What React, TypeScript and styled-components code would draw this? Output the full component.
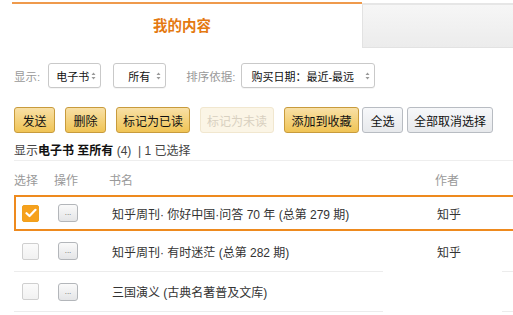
import styled, { createGlobalStyle } from 'styled-components';

const GlobalStyle = createGlobalStyle`
  html, body {
    margin: 0;
    padding: 0;
    background: #ffffff;
    overflow: hidden;
  }
  body {
    font-family: "Liberation Sans", "Noto Sans CJK SC", sans-serif;
    color: #333;
  }
`;

const Page = styled.div`
  position: relative;
  width: 540px;
  height: 315px;
  overflow: hidden;
`;

const TabBar = styled.div`
  display: flex;
  margin: 2px 0 0 12px;
  height: 45px;
`;

type TabProps = {
  active?: boolean;
};

const Tab = styled.div<TabProps>`
  box-sizing: border-box;
  display: flex;
  align-items: center;
  justify-content: center;
  width: ${(p) => (p.active ? '350px' : '160px')};
  height: 45px;
  border-top: 2px solid ${(p) => (p.active ? '#ef9a4c' : '#e6e6e6')};
  border-left: ${(p) => (p.active ? 'none' : '1px solid #e2e2e2')};
  border-bottom: ${(p) => (p.active ? 'none' : '1px solid #e2e2e2')};
  margin-top: ${(p) => (p.active ? '0' : '1px')};
  background: ${(p) =>
    p.active ? '#ffffff' : 'linear-gradient(#f6f6f6, #ececec)'};
  color: #e47911;
  font-size: 14.5px;
  font-weight: bold;
  padding: 0 10px 2px 0;
`;

const FilterRow = styled.div`
  display: flex;
  align-items: center;
  margin: 16px 0 0 14px;
  height: 25px;
  font-size: 12px;
`;

type LabelProps = {
  gap: number;
};

const Label = styled.span<LabelProps>`
  color: #999;
  font-size: 11.5px;
  white-space: nowrap;
  margin-right: ${(p) => p.gap}px;
`;

type SelectProps = {
  w: number;
  padLeft: number;
  after: number;
};

const Select = styled.div<SelectProps>`
  box-sizing: border-box;
  flex-shrink: 0;
  display: flex;
  align-items: center;
  justify-content: space-between;
  width: ${(p) => p.w}px;
  height: 25px;
  padding: 0 4px 0 ${(p) => p.padLeft}px;
  margin-right: ${(p) => p.after}px;
  border: 1px solid #c9c9c9;
  border-radius: 3px;
  background: #fff;
  color: #111;
  font-size: 11px;
  white-space: nowrap;
  box-shadow: 0 1px 0 rgba(0, 0, 0, 0.04);
  svg {
    flex-shrink: 0;
  }
`;

const ButtonRow = styled.div`
  display: flex;
  margin: 19px 0 0 14px;
  height: 26px;
`;

type BtnProps = {
  kind: 'gold' | 'gray' | 'disabled';
  w: number;
  after: number;
};

const Button = styled.div<BtnProps>`
  box-sizing: border-box;
  flex-shrink: 0;
  display: flex;
  align-items: center;
  justify-content: center;
  width: ${(p) => p.w}px;
  height: 26px;
  margin-right: ${(p) => p.after}px;
  border-radius: 3px;
  font-size: 12px;
  white-space: nowrap;
  border: 1px solid
    ${(p) =>
      p.kind === 'gold' ? '#c89b3c' : p.kind === 'gray' ? '#b8bcc2' : '#f1e7cf'};
  background: ${(p) =>
    p.kind === 'gold'
      ? 'linear-gradient(#f8e0a6, #f0c455)'
      : p.kind === 'gray'
        ? 'linear-gradient(#f7f8fa, #e7e9ec)'
        : '#fbf5e6'};
  color: ${(p) => (p.kind === 'disabled' ? '#d8d0c0' : '#111')};
`;

const Status = styled.div`
  margin: 10px 0 0 14px;
  height: 17px;
  line-height: 17px;
  font-size: 12px;
  color: #444;
  border-bottom: 1px solid #eeeeee;
  b {
    color: #111;
  }
`;

const Grid = styled.div`
  display: grid;
  grid-template-columns: 40px 55px 326px 1fr;
  align-items: center;
`;

const Header = styled(Grid)`
  margin-left: 14px;
  padding: 12px 0 6px;
  line-height: 16px;
  font-size: 12px;
  color: #999;
`;

type RowProps = {
  selected?: boolean;
  h: number;
};

const Row = styled(Grid)<RowProps>`
  box-sizing: border-box;
  margin-left: 14px;
  height: ${(p) => p.h}px;
  font-size: 12px;
  color: #333;
  border-bottom: ${(p) => (p.selected ? 'none' : '1px solid #ececec')};
  box-shadow: ${(p) => (p.selected ? 'inset 0 0 0 2px #ee8a1e' : 'none')};
`;

type CellProps = {
  pad: number;
};

const Cell = styled.div<CellProps>`
  display: flex;
  align-items: center;
  padding-left: ${(p) => p.pad}px;
  white-space: nowrap;
`;

const CheckBox = styled.div<{ checked?: boolean }>`
  box-sizing: border-box;
  width: 17px;
  height: 17px;
  border-radius: 2px;
  display: flex;
  align-items: center;
  justify-content: center;
  border: 1px solid ${(p) => (p.checked ? '#f0a01c' : '#cfcfcf')};
  background: ${(p) => (p.checked ? '#f6a11d' : 'linear-gradient(#fbfbfb, #f1f1f1)')};
`;

const MoreButton = styled.div`
  box-sizing: border-box;
  width: 20px;
  height: 18px;
  border: 1px solid #b3b6ba;
  border-radius: 3px;
  background: linear-gradient(#fafafa, #e4e5e7);
  color: #666;
  font-size: 8px;
  line-height: 16px;
  text-align: center;
`;

const Cover = styled.div`
  position: absolute;
  left: 383px;
  top: 268px;
  width: 119px;
  height: 47px;
  background: #fff;
`;

function Arrows() {
  return (
    <svg width="5" height="8" viewBox="0 0 5 8">
      <path d="M2.5 0.5 L4.5 3 L0.5 3 Z M2.5 7.5 L4.5 5 L0.5 5 Z" fill="#999" />
    </svg>
  );
}

function Check() {
  return (
    <svg width="12" height="10" viewBox="0 0 12 10">
      <path
        d="M1.5 5.2 L4.5 8 L10.5 1.8"
        fill="none"
        stroke="#fff"
        strokeWidth="2.2"
        strokeLinecap="round"
        strokeLinejoin="round"
      />
    </svg>
  );
}

const books = [
  { title: '知乎周刊· 你好中国·问答 70 年 (总第 279 期)', author: '知乎', checked: true },
  { title: '知乎周刊· 有时迷茫 (总第 282 期)', author: '知乎', checked: false },
  { title: '三国演义 (古典名著普及文库)', author: '', checked: false },
];

function App() {
  return (
    <Page>
      <GlobalStyle />
      <TabBar>
        <Tab active>我的内容</Tab>
        <Tab />
      </TabBar>

      <FilterRow>
        <Label gap={8}>显示:</Label>
        <Select w={53} padLeft={7} after={12}>
          电子书 <Arrows />
        </Select>
        <Select w={53} padLeft={14} after={20}>
          所有 <Arrows />
        </Select>
        <Label gap={6}>排序依据:</Label>
        <Select w={134} padLeft={9} after={0}>
          购买日期：最近-最远 <Arrows />
        </Select>
      </FilterRow>

      <ButtonRow>
        <Button kind="gold" w={41} after={10}>发送</Button>
        <Button kind="gold" w={41} after={10}>删除</Button>
        <Button kind="gold" w={74} after={10}>标记为已读</Button>
        <Button kind="disabled" w={74} after={10}>标记为未读</Button>
        <Button kind="gold" w={75} after={3}>添加到收藏</Button>
        <Button kind="gray" w={41} after={4}>全选</Button>
        <Button kind="gray" w={86} after={0}>全部取消选择</Button>
      </ButtonRow>

      <Status>
        显示<b>电子书 至所有</b> (4) &nbsp;| 1 已选择
      </Status>

      <Header>
        <span>选择</span>
        <span>操作</span>
        <span>书名</span>
        <span>作者</span>
      </Header>

      {books.map((b, i) => (
        <Row key={i} selected={b.checked} h={i === 0 ? 36 : i === 1 ? 41 : 40}>
          <Cell pad={8}>
            <CheckBox checked={b.checked}>{b.checked && <Check />}</CheckBox>
          </Cell>
          <Cell pad={4}>
            <MoreButton>...</MoreButton>
          </Cell>
          <Cell pad={3}>{b.title}</Cell>
          <Cell pad={2}>{b.author}</Cell>
        </Row>
      ))}

      <Cover />
    </Page>
  );
}

export default App;
